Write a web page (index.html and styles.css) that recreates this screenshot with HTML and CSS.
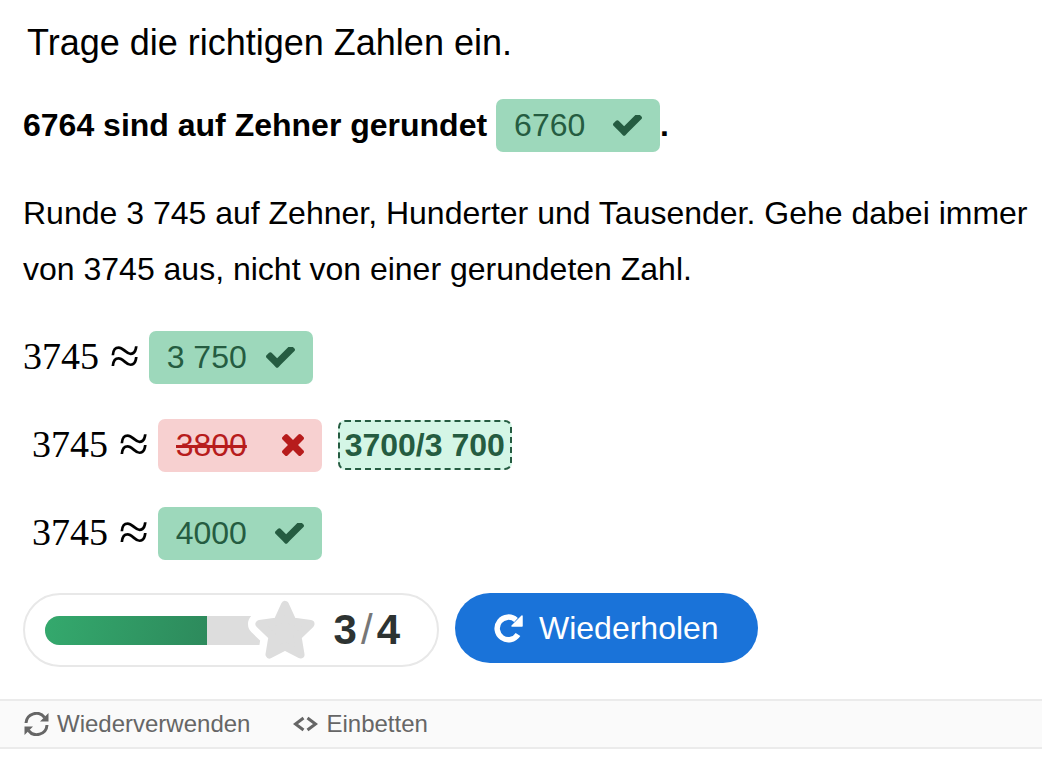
FILE: index.html
```html
<!DOCTYPE html>
<html lang="de">
<head>
<meta charset="utf-8">
<meta name="viewport" content="width=device-width, initial-scale=1">
<title>Zahlen runden</title>
<link rel="stylesheet" href="styles.css">
</head>
<body>
<svg class="symbols" aria-hidden="true">
  <symbol id="check" viewBox="121 434 1550 1088"><path d="M1671 566q0 40-28 68l-724 724-136 136q-28 28-68 28t-68-28l-136-136-362-362q-28-28-28-68t28-68l136-136q28-28 68-28t68 28l294 295 656-657q28-28 68-28t68 28l136 136q28 28 28 68z"/></symbol>
  <symbol id="cross" viewBox="302 366 1188 1188"><path d="M1490 1322q0 40-28 68l-136 136q-28 28-68 28t-68-28l-294-294-294 294q-28 28-68 28t-68-28l-136-136q-28-28-28-68t28-68l294-294-294-294q-28-28-28-68t28-68l136-136q28-28 68-28t68 28l294 294 294-294q28-28 68-28t68 28l136 136q28 28 28 68t-28 68l-294 294 294 294q28 28 28 68z"/></symbol>
</svg>
<main class="exercise">
  <h1 class="intro">Trage die richtigen Zahlen ein.</h1>

  <div class="row row-strong">
    <label for="a1">6764 sind auf Zehner gerundet</label>
    <span class="ending"><span class="field correct"><input id="a1" type="text" value="6760" readonly><svg class="mark" aria-hidden="true"><use href="#check"/></svg></span>.</span>
  </div>

  <p class="task">Runde 3 745 auf Zehner, Hunderter und Tausender. Gehe dabei immer von 3745 aus, nicht von einer gerundeten Zahl.</p>

  <div class="row">
    <label class="math" for="a2"><span>3745</span> <span class="approx">≈</span></label>
    <span class="field correct"><input id="a2" type="text" value="3 750" readonly><svg class="mark" aria-hidden="true"><use href="#check"/></svg></span>
  </div>
  <div class="row indent">
    <label class="math" for="a3"><span>3745</span> <span class="approx">≈</span></label>
    <span class="field wrong"><input id="a3" type="text" value="3800" readonly><svg class="mark mark-cross" aria-hidden="true"><use href="#cross"/></svg></span>
    <span class="solution">3700/3 700</span>
  </div>
  <div class="row indent">
    <label class="math" for="a4"><span>3745</span> <span class="approx">≈</span></label>
    <span class="field correct"><input id="a4" type="text" value="4000" readonly><svg class="mark" aria-hidden="true"><use href="#check"/></svg></span>
  </div>

  <div class="result">
    <div class="score">
      <div class="track"><div class="fill" style="width: 75%"></div></div>
      <svg class="star" viewBox="0 4 76 66" aria-hidden="true">
        <g stroke-linejoin="round">
          <path class="star-halo" d="M38 12 L45.500 28.500 L63.500 31 L50.500 43.500 L53.500 61.500 L38 53.500 L22.500 61.500 L25.500 43.500 L12.500 31 L30.500 28.500 Z"/>
          <path class="star-shape" d="M38 12 L45.500 28.500 L63.500 31 L50.500 43.500 L53.500 61.500 L38 53.500 L22.500 61.500 L25.500 43.500 L12.500 31 L30.500 28.500 Z"/>
        </g>
      </svg>
      <div class="points"><span>3</span><span class="slash">/</span><span>4</span></div>
    </div>
    <button class="retry" type="button">
      <svg class="retry-icon" viewBox="0 0 29 29" aria-hidden="true"><path d="M24 20.500 A11.300 11.300 0 1 1 22 6" fill="none" stroke="currentColor" stroke-width="5.500"/><path d="M28 2 V12 H18 Z" fill="currentColor" stroke="currentColor" stroke-width="1.500" stroke-linejoin="round"/></svg>
      Wiederholen
    </button>
  </div>
</main>
<footer class="actions">
  <button class="action" type="button">
    <svg class="action-icon" viewBox="0 0 25 24" aria-hidden="true"><path d="M2 11 A10.300 10.300 0 0 1 20.500 5.500 M23 13 A10.300 10.300 0 0 1 4.500 18.500" fill="none" stroke="currentColor" stroke-width="3"/><path d="M24.500 1 V9.500 H16 Z M.5 23 V14.500 H9 Z" fill="currentColor"/></svg>
    Wiederverwenden
  </button>
  <button class="action" type="button">
    <svg class="action-icon" viewBox="0 0 25 24" aria-hidden="true"><path d="M10.500 6 L2.500 12 L10.500 18 M14.500 6 L22.500 12 L14.500 18" fill="none" stroke="currentColor" stroke-width="3"/></svg>
    Einbetten
  </button>
</footer>
</body>
</html>
```
FILE: styles.css
```css
* { box-sizing: border-box; }
body {
  margin: 0;
  background: #fff;
  color: #000;
  font: 32px/56px "Liberation Sans", Arial, sans-serif;
}
button, input { font: inherit; border: 0; }
.symbols { position: absolute; width: 0; height: 0; }
.exercise {
  display: flex;
  flex-direction: column;
  gap: 32px;
  padding: 21px 12px 32px 23px;
}
.intro {
  margin: 0;
  padding-left: 4px;
  font-size: 36px;
  font-weight: 400;
  line-height: 44px;
}
.row { display: flex; align-items: center; gap: 9px; height: 56px; }
.row-strong { font-weight: 700; }
.indent { padding-left: 9px; }
.task { margin: 0; }
.ending { display: flex; align-items: center; }
.math {
  display: flex;
  align-items: center;
  gap: 11px;
  font-family: "Liberation Serif", "Times New Roman", serif;
  font-size: 38px;
  line-height: 54px;
  padding-bottom: 2px;
}
.approx { font-size: 54px; line-height: 56px; }
.field {
  display: flex;
  align-items: center;
  width: 164px;
  height: 53px;
  padding: 0 18px;
  border-radius: 7px;
}
.field input {
  flex: 1;
  min-width: 0;
  padding: 0;
  background: transparent;
  color: inherit;
  line-height: 40px;
  outline: 0;
}
.correct { background: #9dd8bb; color: #255c41; font-weight: 400; }
.wrong { background: #f7d0d0; color: #b71c1c; }
.wrong input { text-decoration: line-through; }
.mark { flex: none; width: 29px; height: 21px; fill: currentColor; }
.mark-cross { width: 22px; height: 22px; }
.solution {
  margin-left: 7px;
  padding: 0 5px;
  border: 2px dashed #255c41;
  border-radius: 7px;
  background: #d4f6e6;
  color: #255c41;
  font-weight: 700;
  line-height: 46px;
}
.result { display: flex; align-items: flex-start; gap: 16px; }
.score {
  display: flex;
  align-items: center;
  width: 416px;
  height: 74px;
  padding: 0 37px 0 20px;
  border: 2px solid #e8e8e8;
  border-radius: 37px;
}
.track {
  flex: 1;
  height: 29px;
  border-radius: 15px 0 0 15px;
  background: #ddd;
  overflow: hidden;
}
.fill { height: 100%; background: linear-gradient(100deg, #34a96d, #2d8a5c); }
.star { flex: none; width: 76px; height: 66px; margin-left: -14px; }
.star-halo { fill: #fff; stroke: #fff; stroke-width: 23px; }
.star-shape { fill: #ddd; stroke: #ddd; stroke-width: 8px; }
.points {
  display: flex;
  gap: 4px;
  margin-left: 11px;
  color: #2d3332;
  font-size: 42px;
  font-weight: 700;
}
.slash { color: #777; font-weight: 400; }
.retry {
  display: flex;
  align-items: center;
  gap: 16px;
  height: 70px;
  padding: 0 39px;
  border-radius: 35px;
  background: #1a73d9;
  color: #fff;
}
.retry-icon { width: 29px; height: 29px; }
.actions {
  display: flex;
  gap: 43px;
  padding: 0 24px;
  border: solid #ebebeb;
  border-width: 2px 0;
  background: #fafafa;
}
.action {
  display: flex;
  align-items: center;
  gap: 8px;
  padding: 0;
  background: transparent;
  color: #666;
  font-size: 24px;
  line-height: 46px;
}
.action-icon { width: 25px; height: 24px; }
```
